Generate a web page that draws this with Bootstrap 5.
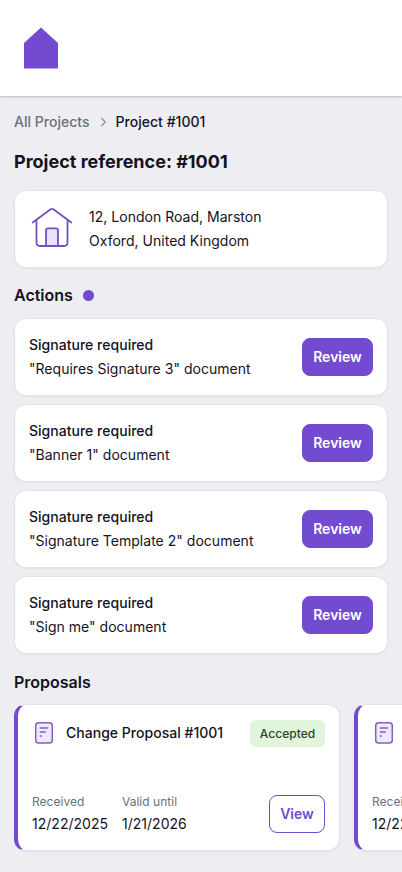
<!DOCTYPE html>
<html lang="en">
<head>
<meta charset="utf-8">
<meta name="viewport" content="width=device-width, initial-scale=1">
<title>Project #1001</title>
<link rel="stylesheet" href="https://cdn.jsdelivr.net/npm/bootstrap@5.3.0/dist/css/bootstrap.min.css">
<style>
  :root { --brand: #724bd1; --ink: #14121f; --gray: #6b7080; }
  body { font-family: Inter, sans-serif; font-size: 14px; line-height: 24px; letter-spacing: .02px; color: var(--ink); background: #eeedf2; height: 872px; overflow: hidden; }
  .site-header { height: 96px; padding: 0 24px; box-shadow: 0 1px 2px rgba(20,18,31,.24); }
  .page { padding: 14px 14px 0; }
  .crumbs { height: 24px; gap: 10px; }
  .crumbs a { color: var(--gray); }
  .panel { border: 1px solid #e3e2e8; border-radius: 12px; padding: 14px; height: 78px; box-shadow: 0 1px 2px rgba(20,18,31,.05); --bs-card-color: var(--ink); }
  h1 { font-size: 18px; line-height: 28px; font-weight: 700; letter-spacing: 0; margin: 14px 0; }
  h2 { font-size: 16px; line-height: 24px; font-weight: 600; letter-spacing: 0; margin: 0; }
  .actions-head { margin: 15px 0 11px; gap: 10px; }
  .proposals-head { margin: 16px 0 10px; }
  .home-icon { margin: 0 15px 1px 1px; }
  .dot { width: 11px; height: 11px; margin-top: 1px; background: var(--brand); }
  .btn { --bs-btn-font-size: 14px; --bs-btn-font-weight: 600; --bs-btn-line-height: 22px; --bs-btn-padding-y: 7px; --bs-btn-padding-x: 10px; --bs-btn-border-radius: 8px; white-space: nowrap; }
  .btn-brand { --bs-btn-color: #fff; --bs-btn-bg: var(--brand); --bs-btn-border-color: var(--brand); --bs-btn-hover-color: #fff; --bs-btn-hover-bg: #633dc0; width: 71px; padding-left: 0; padding-right: 0; }
  .btn-line { --bs-btn-color: var(--brand); --bs-btn-border-color: var(--brand); --bs-btn-hover-bg: var(--brand); --bs-btn-hover-color: #fff; width: 56px; margin-bottom: 3px; }
  .carousel-strip { gap: 14px; margin-right: -14px; padding-bottom: 4px; overflow: hidden; }
  .proposal { width: 326px; height: 147px; border-left: 4px solid var(--brand); }
  .proposal-head { height: 28px; }
  .doc-icon { margin-right: 10px; }
  .status { width: 75px; font-size: 12px; line-height: 17px; font-weight: 500; padding: 5px 0; border-radius: 6px; background: #e1f5dc; color: #21491f; height: 27px; margin-top: 1px; }
  .caption { font-size: 12px; line-height: 20px; color: var(--gray); }
  .date-col { width: 90px; }
</style>
</head>
<body>
<header class="site-header bg-white d-flex align-items-center">
  <svg width="34" height="42" viewBox="0 0 34 42" fill="#724bd1" aria-hidden="true"><path d="M17 .5 34 16v25.500H0V16z"/></svg>
</header>
<main class="page">
  <nav class="crumbs d-flex align-items-center" aria-label="breadcrumb">
    <a href="#" class="text-decoration-none fw-medium">All Projects</a>
    <svg width="6" height="10" viewBox="0 0 6 10" fill="none" stroke="#7b7f8d" stroke-width="1.100"><path d="M1.500 1.200 5.300 5 1.500 8.800"/></svg>
    <span class="fw-medium">Project #1001</span>
  </nav>
  <h1>Project reference: #1001</h1>
  <section class="card panel flex-row align-items-center">
    <svg class="home-icon flex-shrink-0" width="44" height="48" viewBox="0 0 44 48" fill="none" stroke="#7450bd" stroke-width="1.800" stroke-linecap="round" stroke-linejoin="round"><path d="M2.700 17.500 20.300 4.500q1.700-1.100 3.400 0l17.600 13M6.500 16v21.500q0 3.500 3.500 3.500h24q3.500 0 3.500-3.500V16"/><path fill="#ebe2ff" d="M16 41V25.300q0-2 2-2h8q2 0 2 2V41z"/></svg>
    <div>12, London Road, Marston<br>Oxford, United Kingdom</div>
  </section>
  <div class="actions-head d-flex align-items-center"><h2>Actions</h2><span class="dot rounded-circle"></span></div>
  <section class="d-flex flex-column gap-2">
    <div class="card panel flex-row align-items-center justify-content-between"><div><div class="fw-medium">Signature required</div>"Requires Signature 3" document</div><button class="btn btn-brand">Review</button></div>
    <div class="card panel flex-row align-items-center justify-content-between"><div><div class="fw-medium">Signature required</div>"Banner 1" document</div><button class="btn btn-brand">Review</button></div>
    <div class="card panel flex-row align-items-center justify-content-between"><div><div class="fw-medium">Signature required</div>"Signature Template 2" document</div><button class="btn btn-brand">Review</button></div>
    <div class="card panel flex-row align-items-center justify-content-between"><div><div class="fw-medium">Signature required</div>"Sign me" document</div><button class="btn btn-brand">Review</button></div>
  </section>
  <h2 class="proposals-head">Proposals</h2>
  <section class="carousel-strip d-flex">
    <article class="card panel proposal flex-shrink-0 justify-content-between">
      <div class="proposal-head d-flex align-items-center">
        <svg class="doc-icon" width="24" height="24" viewBox="0 0 24 24" fill="none" stroke="#8063b9" stroke-width="1.500" stroke-linecap="round"><rect x="3.700" y="1.700" width="16.600" height="20.300" rx="3" fill="#efe6ff"/><path d="M8.300 7h7.400M8.300 11h5M8.300 15h1"/></svg>
        <span class="fw-medium">Change Proposal #1001</span><span class="status text-center ms-auto">Accepted</span>
      </div>
      <div class="d-flex align-items-end">
        <div class="date-col"><div class="caption">Received</div>12/22/2025</div>
        <div><div class="caption">Valid until</div>1/21/2026</div>
        <button class="btn btn-line ms-auto">View</button>
      </div>
    </article>
    <article class="card panel proposal flex-shrink-0 justify-content-between">
      <div class="proposal-head d-flex align-items-center">
        <svg class="doc-icon" width="24" height="24" viewBox="0 0 24 24" fill="none" stroke="#8063b9" stroke-width="1.500" stroke-linecap="round"><rect x="3.700" y="1.700" width="16.600" height="20.300" rx="3" fill="#efe6ff"/><path d="M8.300 7h7.400M8.300 11h5M8.300 15h1"/></svg>
      </div>
      <div><div class="caption">Received</div>12/22/2025</div>
    </article>
  </section>
</main>
<script src="https://cdn.jsdelivr.net/npm/bootstrap@5.3.0/dist/js/bootstrap.bundle.min.js"></script>
</body>
</html>
